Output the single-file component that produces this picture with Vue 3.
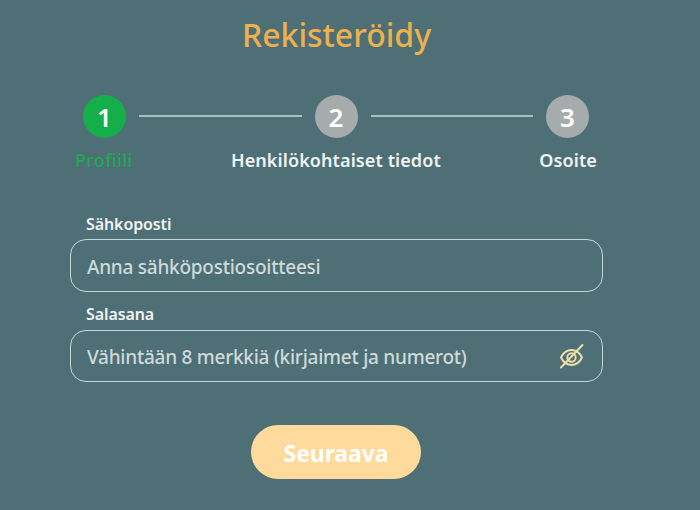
<script setup>
const steps = [
  { number: 1, label: "Profiili", active: true },
  { number: 2, label: "Henkilökohtaiset tiedot", active: false },
  { number: 3, label: "Osoite", active: false },
];
</script>

<template>
  <div class="register">
    <h1 class="register__title">Rekisteröidy</h1>

    <div class="stepper">
      <div class="stepper__track">
        <template v-for="(step, index) in steps" :key="step.number">
          <span v-if="index > 0" class="stepper__line"></span>
          <span class="stepper__circle" :class="{ 'stepper__circle--active': step.active }">{{ step.number }}</span>
        </template>
      </div>
      <div class="stepper__labels">
        <span
          v-for="step in steps"
          :key="step.label"
          class="stepper__label"
          :class="{ 'stepper__label--active': step.active }"
        >{{ step.label }}</span>
      </div>
    </div>

    <form class="form" @submit.prevent>
      <label class="form__label" for="email">Sähkoposti</label>
      <div class="form__field">
        <input id="email" class="form__input" type="email" placeholder="Anna sähköpostiosoitteesi">
      </div>

      <label class="form__label form__label--second" for="password">Salasana</label>
      <div class="form__field form__field--short">
        <input id="password" class="form__input" type="password" placeholder="Vähintään 8 merkkiä (kirjaimet ja numerot)">
        <svg class="form__eye" viewBox="0 0 26 26" fill="none" stroke="#f0dfa8" stroke-width="1.9" stroke-linecap="round" aria-hidden="true">
          <path d="M2 14.500C4.500 9.500 8.200 7 12.500 7S20.500 9.500 23 14.500C20.500 19.500 16.800 22 12.500 22S4.500 19.500 2 14.500Z" />
          <circle cx="12.500" cy="14.500" r="4.200" />
          <path d="M2 24.500L23.500 2" />
        </svg>
      </div>

      <button class="form__submit" type="submit">Seuraava</button>
    </form>
  </div>
</template>

<style scoped>
.register {
  box-sizing: border-box;
  width: 700px;
  height: 510px;
  padding: 15px 97px 0 70px;
  background-color: #4e6f75;
  font-family: "Noto Sans", sans-serif;
  overflow: hidden;
}

.register__title {
  margin: 0;
  height: 80px;
  color: #ecb04f;
  font-size: 32px;
  font-weight: 500;
  line-height: 40px;
  text-align: center;
}

.stepper {
  margin-bottom: 42px;
}

.stepper__track {
  display: flex;
  align-items: center;
  gap: 13px;
  padding: 0 14px 0 13px;
}

.stepper__circle {
  display: flex;
  flex: none;
  align-items: center;
  justify-content: center;
  width: 43px;
  height: 43px;
  border-radius: 50%;
  background-color: #a6acac;
  color: #fff;
  font-size: 26px;
  font-weight: 600;
}

.stepper__circle--active {
  background-color: #14ae4b;
}

.stepper__line {
  flex: 1;
  height: 2px;
  margin-top: -1px;
  background-color: #a9bfbf;
}

.stepper__labels {
  display: flex;
  justify-content: space-between;
  margin-top: 10px;
  padding: 0 6px 0 5px;
}

.stepper__label {
  color: #eef3f3;
  font-size: 18px;
  font-weight: 600;
  line-height: 24px;
  letter-spacing: 0.1px;
}

.stepper__label--active {
  color: #1fa855;
  font-weight: 500;
  letter-spacing: 0.3px;
}

.form {
  display: flex;
  flex-direction: column;
}

.form__label {
  padding-left: 16px;
  color: #eef3f3;
  font-size: 16px;
  font-weight: 600;
  line-height: 20px;
  letter-spacing: -0.1px;
}

.form__label--second {
  margin-top: 12px;
}

.form__field {
  display: flex;
  align-items: center;
  box-sizing: border-box;
  height: 53px;
  margin-top: 5px;
  padding: 0 17px 0 16px;
  border: 1px solid #c5d6d8;
  border-radius: 16px;
}

.form__field--short {
  height: 52px;
  margin-top: 6px;
}

.form__input {
  flex: 1;
  min-width: 0;
  padding: 2px 0 0;
  border: 0;
  outline: 0;
  background: transparent;
  font-family: inherit;
  font-size: 19px;
  font-weight: 500;
  letter-spacing: -0.25px;
}

.form__input::placeholder {
  color: #cfdada;
  opacity: 1;
}

.form__eye {
  flex: none;
  width: 26px;
  height: 26px;
}

.form__submit {
  align-self: center;
  width: 170px;
  height: 54px;
  margin-top: 43px;
  margin-right: 1px;
  padding: 2px 0 0;
  border: 0;
  border-radius: 27px;
  background-color: #fedb9d;
  color: #fff;
  font-family: inherit;
  font-size: 23px;
  font-weight: 700;
  letter-spacing: -0.1px;
  cursor: pointer;
}
</style>
